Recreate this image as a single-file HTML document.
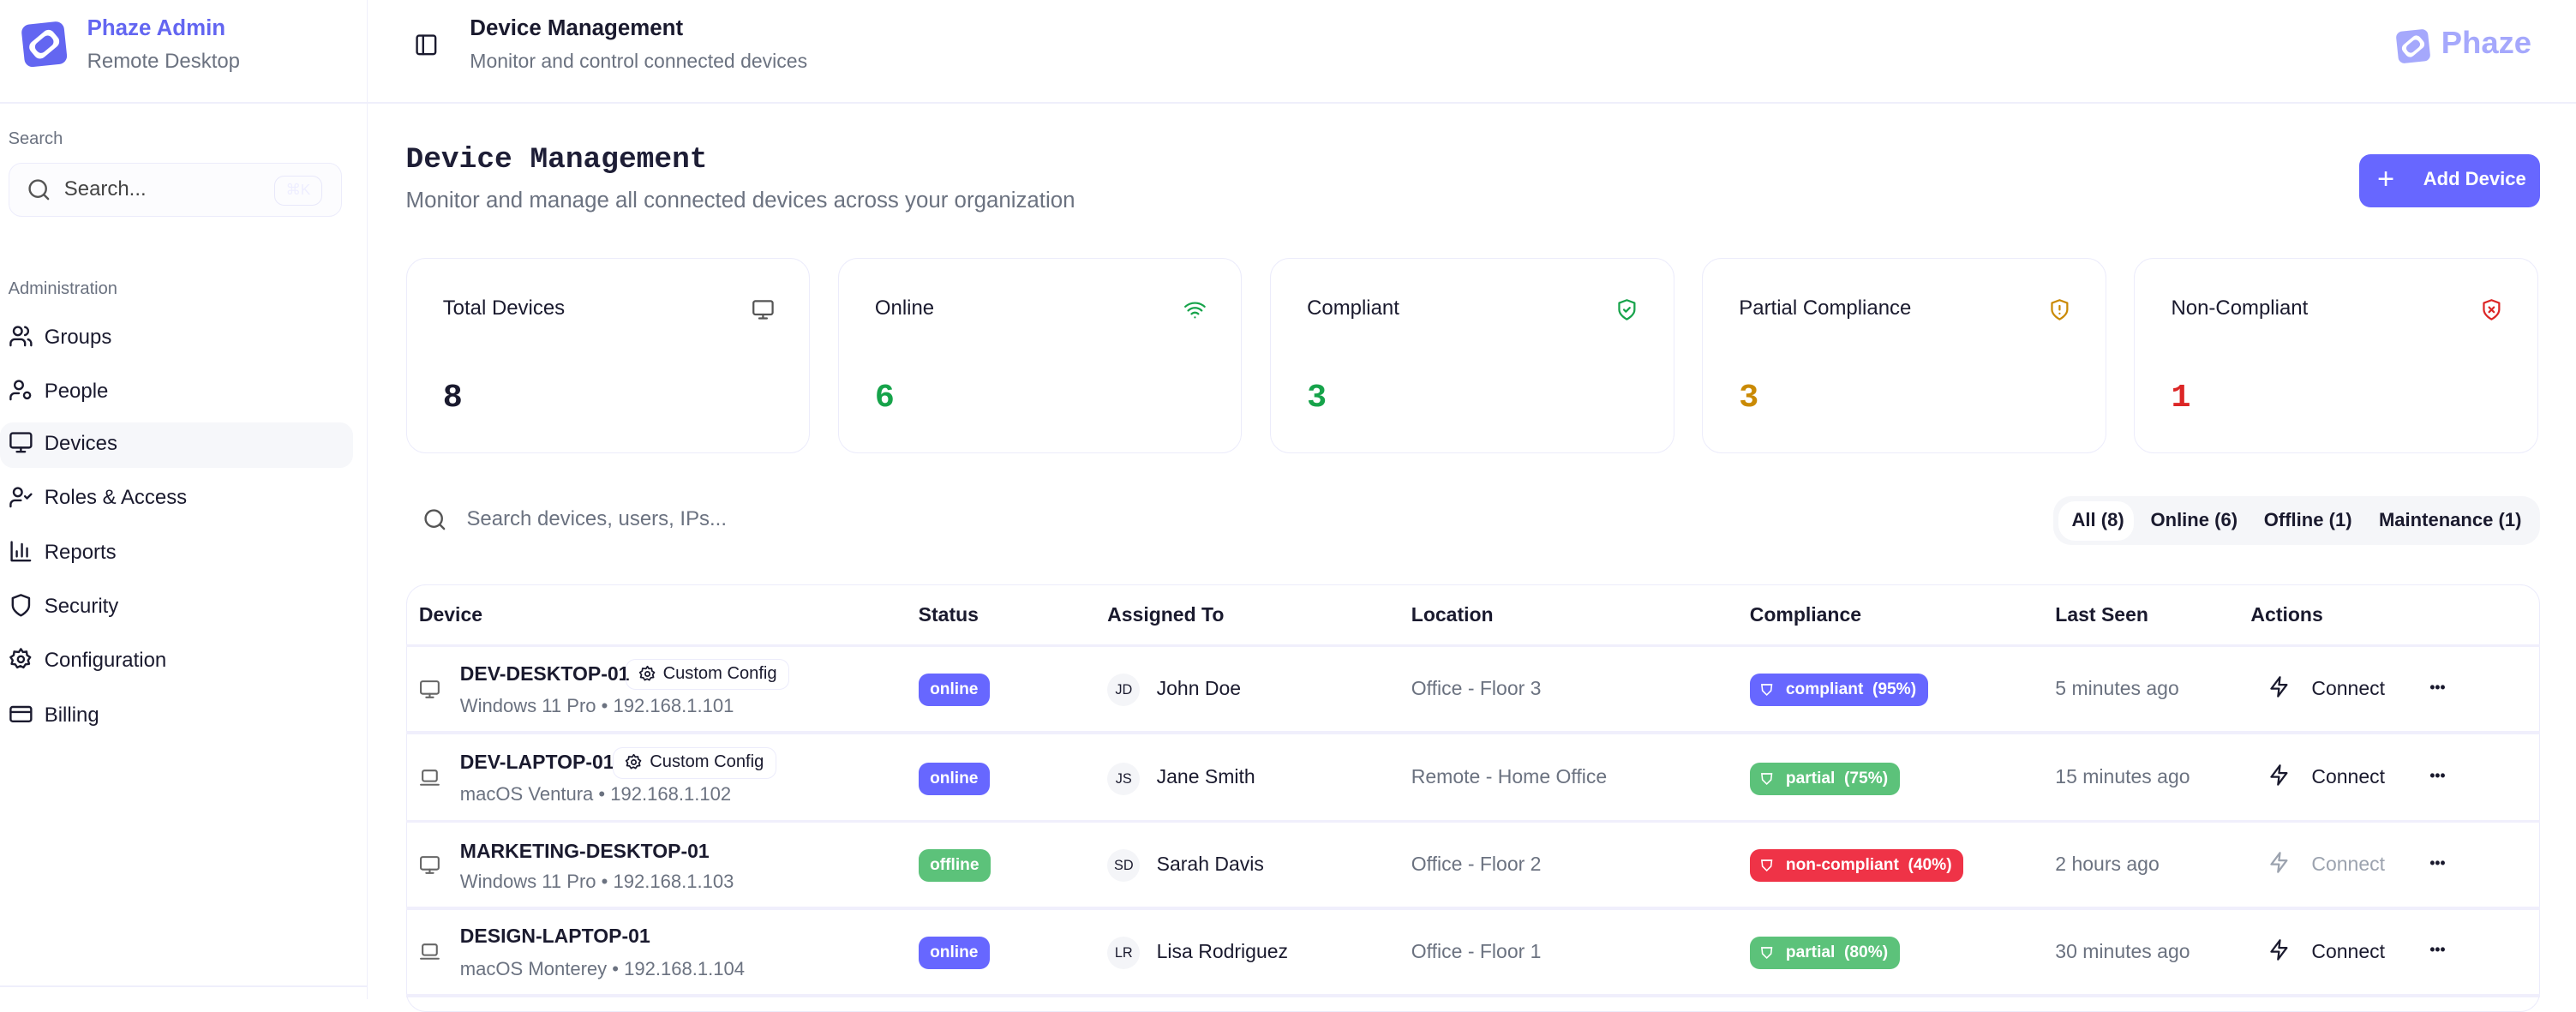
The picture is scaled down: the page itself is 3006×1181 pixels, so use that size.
<!DOCTYPE html>
<html><head><meta charset="utf-8">
<style>
html,body{margin:0;padding:0;background:#fff;}
body{width:3006px;height:1166px;overflow:hidden;}
#r{position:absolute;left:0;top:0;width:1568px;height:608px;zoom:1.9171;font-family:"Liberation Sans",sans-serif;color:#1a1a2e;}
.a{position:absolute;white-space:nowrap;}
.g{color:#6b7280;}
.ic{position:absolute;fill:none;stroke:currentColor;stroke-width:2;stroke-linecap:round;stroke-linejoin:round;}
.nav{position:absolute;left:5px;font-size:12.5px;white-space:nowrap;}
.nav svg{position:absolute;left:0;top:-1px;width:15px;height:15px;}
.nav span{position:absolute;left:22px;top:0;white-space:nowrap;}
.card{position:absolute;top:157px;width:246px;height:119px;border:1px solid #ececfb;border-radius:12px;box-sizing:border-box;}
.card .t{position:absolute;left:22px;top:23px;font-size:12.5px;}
.card .v{position:absolute;left:22px;top:73px;font-size:20px;font-weight:bold;font-family:"Liberation Mono",monospace;}
.card svg{position:absolute;left:210px;top:24px;width:14px;height:14px;}
.th{position:absolute;top:367px;font-size:12px;font-weight:bold;color:#1a1a2e;}
.pill{position:absolute;height:20px;line-height:20px;border-radius:6px;color:#fff;font-size:10px;font-weight:bold;padding:0 7px;box-sizing:border-box;white-space:nowrap;}
.hl{position:absolute;left:247px;width:1299px;height:2px;background:#f0effc;}
.nm{font-size:12px;font-weight:bold;}
.sub{font-size:11.5px;color:#6b7280;}
.tag{position:absolute;height:19px;border:1px solid #ececfb;border-radius:6px;font-size:10.5px;line-height:17px;padding:0 7px 0 22px;box-sizing:border-box;white-space:nowrap;}
.tag svg{position:absolute;left:7px;top:3px;width:11px;height:11px;}
.av{position:absolute;left:674px;width:20px;height:20px;border-radius:10px;background:#f4f5f8;font-size:8.5px;text-align:center;line-height:20px;}
.cell{position:absolute;font-size:12px;white-space:nowrap;}
.conn{position:absolute;left:1380px;font-size:12px;white-space:nowrap;}
.conn svg{position:absolute;left:0;top:-1px;width:14px;height:14px;}
.conn span{position:absolute;left:27px;top:0;}
.dots{position:absolute;left:1479px;font-size:9px;font-weight:bold;letter-spacing:0px;}
</style></head><body><div id="r">
<!-- sidebar -->
<div class="a" style="left:223px;top:0;width:1px;height:608px;background:#efeffb"></div>
<div class="a" style="left:0;top:62px;width:1568px;height:1px;background:#efeffb"></div>
<div class="a" style="left:0;top:600px;width:223px;height:1px;background:#efeffb"></div>
<svg class="a" style="left:11px;top:11px" width="32" height="32" viewBox="0 0 32 32"><rect x="3" y="3" width="26" height="26" rx="5" fill="#6366f1" transform="rotate(-6 16 16)"/><rect x="7" y="10" width="18" height="12" rx="4" fill="#fff" transform="rotate(-40 16 16)"/><rect x="10" y="12.5" width="12" height="7" rx="3" fill="#6366f1" transform="rotate(-40 16 16)"/></svg>
<div class="a" style="left:53px;top:10px;font-size:13.5px;font-weight:bold;color:#6366f1">Phaze Admin</div>
<div class="a g" style="left:53px;top:30px;font-size:12.5px">Remote Desktop</div>
<div class="a g" style="left:5px;top:79px;font-size:10.5px">Search</div>
<div class="a" style="left:5px;top:99px;width:203px;height:33px;border:1px solid #ececfb;border-radius:8px;background:#fcfcfe;box-sizing:border-box"></div>
<svg class="ic" style="left:16px;top:108px;width:15px;height:15px;color:#555" viewBox="0 0 24 24"><circle cx="11" cy="11" r="8"/><path d="M21 21l-4.3-4.3"/></svg>
<div class="a" style="left:39px;top:108px;font-size:12.5px;color:#444">Search...</div>
<div class="a" style="left:167px;top:107px;width:29px;height:18px;border:1px solid #e8e8fa;border-radius:6px;box-sizing:border-box;font-size:9px;color:#eef;text-align:center;line-height:16px">⌘K</div>
<div class="a g" style="left:5px;top:170px;font-size:10.5px">Administration</div>
<div class="a" style="left:0;top:257px;width:215px;height:28px;border-radius:8px;background:#f6f7fa"></div>
<div class="nav" style="top:198px"><svg class="ic" viewBox="0 0 24 24"><circle cx="9" cy="7" r="4"/><path d="M2 21v-2a4 4 0 0 1 4-4h6a4 4 0 0 1 4 4v2M16 3.1a4 4 0 0 1 0 7.8M22 21v-2a4 4 0 0 0-3-3.9"/></svg><span>Groups</span></div>
<div class="nav" style="top:231px"><svg class="ic" viewBox="0 0 24 24"><circle cx="10" cy="7" r="4"/><path d="M2 21v-2a4 4 0 0 1 4-4h4"/><circle cx="18" cy="17" r="3"/></svg><span>People</span></div>
<div class="nav" style="top:263px"><svg class="ic" viewBox="0 0 24 24"><rect x="2" y="3" width="20" height="14" rx="2"/><path d="M8 21h8M12 17v4"/></svg><span>Devices</span></div>
<div class="nav" style="top:296px"><svg class="ic" viewBox="0 0 24 24"><circle cx="9" cy="7" r="4"/><path d="M2 21v-2a4 4 0 0 1 4-4h6M16 11l2 2 4-4"/></svg><span>Roles &amp; Access</span></div>
<div class="nav" style="top:329px"><svg class="ic" viewBox="0 0 24 24"><path d="M3 3v18h18M8 17v-5M13 17V5M18 17v-8"/></svg><span>Reports</span></div>
<div class="nav" style="top:362px"><svg class="ic" viewBox="0 0 24 24"><path d="M12 22s8-4 8-10V5l-8-3-8 3v7c0 6 8 10 8 10z"/></svg><span>Security</span></div>
<div class="nav" style="top:395px"><svg class="ic" viewBox="0 0 24 24"><circle cx="12" cy="12" r="3"/><path d="M12 2l2 3 3.5-.5.5 3.5 3 2-2 3 1 3.5-3.5.5-2 3-3-1.5-3 1.5-2-3-3.5-.5 1-3.5-2-3 3-2 .5-3.5L10 5z"/></svg><span>Configuration</span></div>
<div class="nav" style="top:428px"><svg class="ic" viewBox="0 0 24 24"><rect x="2" y="5" width="20" height="14" rx="2"/><path d="M2 10h20"/></svg><span>Billing</span></div>
<!-- header -->
<svg class="ic" style="left:252px;top:20px;width:15px;height:15px" viewBox="0 0 24 24"><rect x="3" y="3" width="18" height="18" rx="2"/><path d="M9 3v18"/></svg>
<div class="a" style="left:286px;top:10px;font-size:13.5px;font-weight:bold">Device Management</div>
<div class="a g" style="left:286px;top:30px;font-size:12px">Monitor and control connected devices</div>
<svg class="a" style="left:1457px;top:16px" width="24" height="24" viewBox="0 0 32 32"><rect x="3" y="3" width="26" height="26" rx="5" fill="#a5a8fc" transform="rotate(-6 16 16)"/><rect x="7" y="10" width="18" height="12" rx="4" fill="#fff" transform="rotate(-40 16 16)"/><rect x="10" y="12.5" width="12" height="7" rx="3" fill="#a5a8fc" transform="rotate(-40 16 16)"/></svg>
<div class="a" style="left:1486px;top:15px;font-size:19px;font-weight:bold;color:#a5a8fc">Phaze</div>
<!-- title -->
<div class="a" style="left:247px;top:87px;font-size:18px;font-family:'Liberation Mono',monospace;font-weight:bold;color:#1e1e36">Device Management</div>
<div class="a g" style="left:247px;top:115px;font-size:13.5px">Monitor and manage all connected devices across your organization</div>
<div class="a" style="left:1436px;top:94px;width:110px;height:32px;border-radius:7px;background:#6767ff;color:#fff"><span class="a" style="left:11px;top:5px;font-size:18px;font-weight:300">+</span><span class="a" style="left:39px;top:8.5px;font-size:11.5px;font-weight:bold">Add Device</span></div>
<!-- cards -->
<div class="card" style="left:247px"><div class="t">Total Devices</div><svg class="ic" style="color:#555" viewBox="0 0 24 24"><rect x="2" y="3" width="20" height="14" rx="2"/><path d="M8 21h8M12 17v4"/></svg><div class="v">8</div></div>
<div class="card" style="left:510px"><div class="t">Online</div><svg class="ic" style="color:#16a34a" viewBox="0 0 24 24"><path d="M12 20h.01M2 8.8a15 15 0 0 1 20 0M5 12.9a10 10 0 0 1 14 0M8.5 16.4a5 5 0 0 1 7 0"/></svg><div class="v" style="color:#16a34a">6</div></div>
<div class="card" style="left:773px"><div class="t">Compliant</div><svg class="ic" style="color:#16a34a" viewBox="0 0 24 24"><path d="M12 22s8-4 8-10V5l-8-3-8 3v7c0 6 8 10 8 10z"/><path d="M9 12l2 2 4-4"/></svg><div class="v" style="color:#16a34a">3</div></div>
<div class="card" style="left:1036px"><div class="t">Partial Compliance</div><svg class="ic" style="color:#ca8a04" viewBox="0 0 24 24"><path d="M12 22s8-4 8-10V5l-8-3-8 3v7c0 6 8 10 8 10z"/><path d="M12 8v4M12 16h.01"/></svg><div class="v" style="color:#ca8a04">3</div></div>
<div class="card" style="left:1299px"><div class="t">Non-Compliant</div><svg class="ic" style="color:#dc2626" viewBox="0 0 24 24"><path d="M12 22s8-4 8-10V5l-8-3-8 3v7c0 6 8 10 8 10z"/><path d="M9.5 9.5l5 5M14.5 9.5l-5 5"/></svg><div class="v" style="color:#dc2626">1</div></div>
<!-- search/filter -->
<svg class="ic" style="left:257px;top:309px;width:15px;height:15px;color:#555" viewBox="0 0 24 24"><circle cx="11" cy="11" r="8"/><path d="M21 21l-4.3-4.3"/></svg>
<div class="a g" style="left:284px;top:309px;font-size:12.5px">Search devices, users, IPs...</div>
<div class="a" style="left:1250px;top:302px;width:296px;height:30px;border-radius:11px;background:#f5f6f9"></div>
<div class="a" style="left:1253px;top:305px;width:46px;height:24px;border-radius:10px;background:#fff"></div>
<div class="a" style="left:1261px;top:310px;font-size:11.5px;font-weight:bold">All (8)</div>
<div class="a" style="left:1309px;top:310px;font-size:11.5px;font-weight:bold">Online (6)</div>
<div class="a" style="left:1378px;top:310px;font-size:11.5px;font-weight:bold">Offline (1)</div>
<div class="a" style="left:1448px;top:310px;font-size:11.5px;font-weight:bold">Maintenance (1)</div>
<!-- table -->
<div class="a" style="left:247px;top:356px;width:1299px;height:260px;border:1px solid #ececfb;border-radius:12px;box-sizing:border-box"></div>
<div class="th" style="left:255px">Device</div><div class="th" style="left:559px">Status</div><div class="th" style="left:674px">Assigned To</div><div class="th" style="left:859px">Location</div><div class="th" style="left:1065px">Compliance</div><div class="th" style="left:1251px">Last Seen</div><div class="th" style="left:1370px">Actions</div>
<div class="hl" style="top:392px"></div><div class="hl" style="top:445px"></div><div class="hl" style="top:499px"></div><div class="hl" style="top:552px"></div><div class="hl" style="top:605px"></div>

<!-- row1 -->
<svg class="ic" style="left:255px;top:413px;width:13px;height:13px;color:#666" viewBox="0 0 24 24"><rect x="2" y="3" width="20" height="14" rx="2"/><path d="M8 21h8M12 17v4"/></svg>
<div class="a nm" style="left:280px;top:403px">DEV-DESKTOP-01</div>
<div class="tag" style="left:381px;top:401px"><svg class="ic" viewBox="0 0 24 24"><circle cx="12" cy="12" r="3"/><path d="M12 2l2 3 3.5-.5.5 3.5 3 2-2 3 1 3.5-3.5.5-2 3-3-1.5-3 1.5-2-3-3.5-.5 1-3.5-2-3 3-2 .5-3.5L10 5z"/></svg>Custom Config</div>
<div class="a sub" style="left:280px;top:423px">Windows 11 Pro • 192.168.1.101</div>
<div class="pill" style="left:559px;top:410px;background:#6767ff">online</div>
<div class="av" style="top:410px">JD</div><div class="cell" style="left:704px;top:412px">John Doe</div>
<div class="cell g" style="left:859px;top:412px">Office - Floor 3</div>
<div class="pill" style="left:1065px;top:410px;background:#6767ff;padding-left:22px">compliant&nbsp;&nbsp;(95%)<span class="a" style="left:7px;top:0;font-size:9px">⛉</span></div>
<div class="cell g" style="left:1251px;top:412px">5 minutes ago</div>
<div class="conn" style="top:412px"><svg class="ic" viewBox="0 0 24 24"><path d="M13 2L4 14h8l-1 8 9-12h-8z"/></svg><span>Connect</span></div>
<div class="dots" style="top:413px">•••</div>

<!-- row2 -->
<svg class="ic" style="left:255px;top:467px;width:13px;height:13px;color:#666" viewBox="0 0 24 24"><rect x="4" y="4" width="16" height="12" rx="2"/><path d="M2 20h20"/></svg>
<div class="a nm" style="left:280px;top:457px">DEV-LAPTOP-01</div>
<div class="tag" style="left:373px;top:455px"><svg class="ic" viewBox="0 0 24 24"><circle cx="12" cy="12" r="3"/><path d="M12 2l2 3 3.5-.5.5 3.5 3 2-2 3 1 3.5-3.5.5-2 3-3-1.5-3 1.5-2-3-3.5-.5 1-3.5-2-3 3-2 .5-3.5L10 5z"/></svg>Custom Config</div>
<div class="a sub" style="left:280px;top:477px">macOS Ventura • 192.168.1.102</div>
<div class="pill" style="left:559px;top:464px;background:#6767ff">online</div>
<div class="av" style="top:464px">JS</div><div class="cell" style="left:704px;top:466px">Jane Smith</div>
<div class="cell g" style="left:859px;top:466px">Remote - Home Office</div>
<div class="pill" style="left:1065px;top:464px;background:#5cc27a;padding-left:22px">partial&nbsp;&nbsp;(75%)<span class="a" style="left:7px;top:0;font-size:9px">⛉</span></div>
<div class="cell g" style="left:1251px;top:466px">15 minutes ago</div>
<div class="conn" style="top:466px"><svg class="ic" viewBox="0 0 24 24"><path d="M13 2L4 14h8l-1 8 9-12h-8z"/></svg><span>Connect</span></div>
<div class="dots" style="top:467px">•••</div>

<!-- row3 -->
<svg class="ic" style="left:255px;top:520px;width:13px;height:13px;color:#666" viewBox="0 0 24 24"><rect x="2" y="3" width="20" height="14" rx="2"/><path d="M8 21h8M12 17v4"/></svg>
<div class="a nm" style="left:280px;top:511px">MARKETING-DESKTOP-01</div>
<div class="a sub" style="left:280px;top:530px">Windows 11 Pro • 192.168.1.103</div>
<div class="pill" style="left:559px;top:517px;background:#5cc27a">offline</div>
<div class="av" style="top:517px">SD</div><div class="cell" style="left:704px;top:519px">Sarah Davis</div>
<div class="cell g" style="left:859px;top:519px">Office - Floor 2</div>
<div class="pill" style="left:1065px;top:517px;background:#ef3347;padding-left:22px">non-compliant&nbsp;&nbsp;(40%)<span class="a" style="left:7px;top:0;font-size:9px">⛉</span></div>
<div class="cell g" style="left:1251px;top:519px">2 hours ago</div>
<div class="conn" style="top:519px;color:#9ca3af"><svg class="ic" viewBox="0 0 24 24"><path d="M13 2L4 14h8l-1 8 9-12h-8z"/></svg><span>Connect</span></div>
<div class="dots" style="top:520px">•••</div>

<!-- row4 -->
<svg class="ic" style="left:255px;top:573px;width:13px;height:13px;color:#666" viewBox="0 0 24 24"><rect x="4" y="4" width="16" height="12" rx="2"/><path d="M2 20h20"/></svg>
<div class="a nm" style="left:280px;top:563px">DESIGN-LAPTOP-01</div>
<div class="a sub" style="left:280px;top:583px">macOS Monterey • 192.168.1.104</div>
<div class="pill" style="left:559px;top:570px;background:#6767ff">online</div>
<div class="av" style="top:570px">LR</div><div class="cell" style="left:704px;top:572px">Lisa Rodriguez</div>
<div class="cell g" style="left:859px;top:572px">Office - Floor 1</div>
<div class="pill" style="left:1065px;top:570px;background:#5cc27a;padding-left:22px">partial&nbsp;&nbsp;(80%)<span class="a" style="left:7px;top:0;font-size:9px">⛉</span></div>
<div class="cell g" style="left:1251px;top:572px">30 minutes ago</div>
<div class="conn" style="top:572px"><svg class="ic" viewBox="0 0 24 24"><path d="M13 2L4 14h8l-1 8 9-12h-8z"/></svg><span>Connect</span></div>
<div class="dots" style="top:573px">•••</div>
</div></body></html>
